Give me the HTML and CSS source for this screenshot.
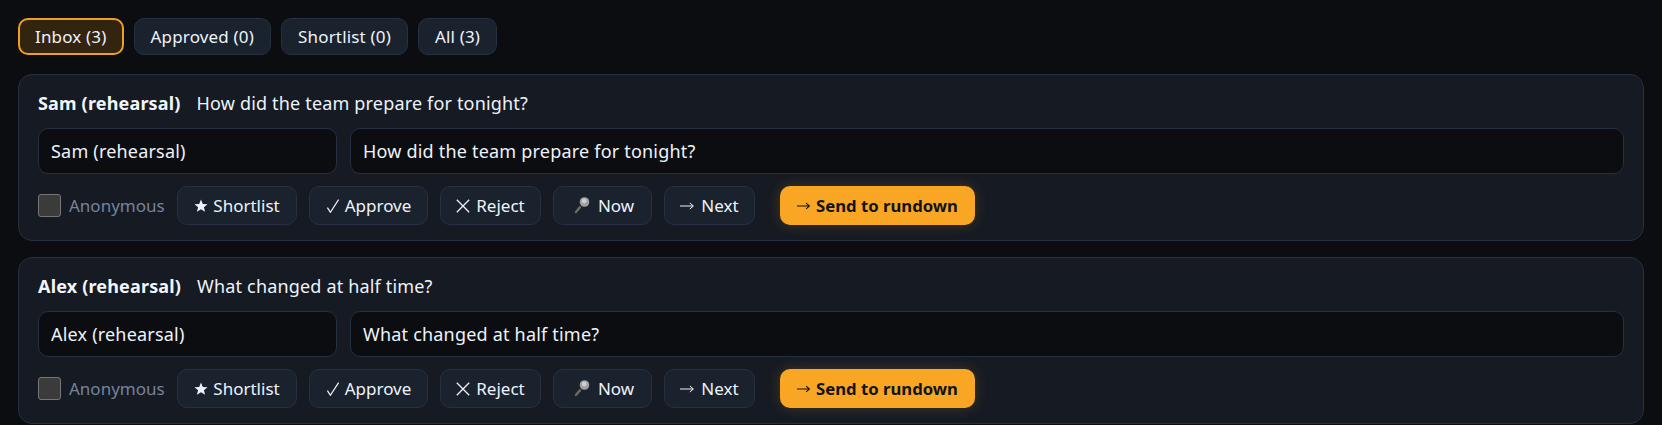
FILE: index.html
```html
<!DOCTYPE html>
<html lang="en">
<head>
<meta charset="utf-8">
<title>Questions</title>
<link rel="stylesheet" href="styles.css">
</head>
<body>
<main class="page">
  <nav class="tabs">
    <button class="tab tab-active">Inbox (3)</button>
    <button class="tab">Approved (0)</button>
    <button class="tab">Shortlist (0)</button>
    <button class="tab">All (3)</button>
  </nav>
  <section class="card">
    <div class="head"><strong class="name">Sam (rehearsal)</strong><span>How did the team prepare for tonight?</span></div>
    <div class="fields">
      <input class="field field-name" value="Sam (rehearsal)">
      <input class="field field-q" value="How did the team prepare for tonight?">
    </div>
    <div class="actions">
      <label class="anon"><input type="checkbox" class="check"><span>Anonymous</span></label>
      <button class="btn b-short"><svg class="ico-star" viewBox="0 0 14 14"><path d="M7 .5l1.800 4.400 4.700.3-3.600 3 1.200 4.600L7 10.300l-4.100 2.500 1.200-4.600-3.600-3 4.700-.3z" fill="currentColor"/></svg>Shortlist</button>
      <button class="btn b-appr"><svg class="ico" viewBox="0 0 14 15"><path d="M1 9.200l3.200 5L13 .6" fill="none" stroke="currentColor" stroke-width="1.300"/></svg>Approve</button>
      <button class="btn b-rej"><svg class="ico" viewBox="0 0 14 14"><path d="M.8.800l12.400 12.400M13.200.800L.8 13.200" fill="none" stroke="currentColor" stroke-width="1.300"/></svg>Reject</button>
      <button class="btn b-now"><svg class="mic" viewBox="0 0 20 18"><path d="M2.200 17.800L.4 16l6.800-8.800 3.600 3.600z" fill="#222"/><path d="M3.500 14.900l5.200-6.200 1.700 1.700-5.400 6z" fill="#6e6e6e"/><circle cx="13.500" cy="5" r="4.800" fill="#a0a0a0"/><circle cx="13.200" cy="4" r="2.400" fill="#cfcfcf"/></svg>Now</button>
      <button class="btn b-next"><svg class="ico arrow" viewBox="0 0 14 8"><path d="M0 4h13M9.800 1L13.400 4 9.800 7" fill="none" stroke="currentColor" stroke-width="1"/></svg>Next</button>
      <button class="btn-send"><svg class="ico arrow arrow-s" viewBox="0 0 14 8"><path d="M0 4h13M9.800 1L13.400 4 9.800 7" fill="none" stroke="currentColor" stroke-width="1.100"/></svg>Send to rundown</button>
    </div>
  </section>
  <section class="card">
    <div class="head"><strong class="name">Alex (rehearsal)</strong><span>What changed at half time?</span></div>
    <div class="fields">
      <input class="field field-name" value="Alex (rehearsal)">
      <input class="field field-q" value="What changed at half time?">
    </div>
    <div class="actions">
      <label class="anon"><input type="checkbox" class="check"><span>Anonymous</span></label>
      <button class="btn b-short"><svg class="ico-star" viewBox="0 0 14 14"><path d="M7 .5l1.800 4.400 4.700.3-3.600 3 1.200 4.600L7 10.300l-4.100 2.500 1.200-4.600-3.600-3 4.700-.3z" fill="currentColor"/></svg>Shortlist</button>
      <button class="btn b-appr"><svg class="ico" viewBox="0 0 14 15"><path d="M1 9.200l3.200 5L13 .6" fill="none" stroke="currentColor" stroke-width="1.300"/></svg>Approve</button>
      <button class="btn b-rej"><svg class="ico" viewBox="0 0 14 14"><path d="M.8.800l12.400 12.400M13.200.800L.8 13.200" fill="none" stroke="currentColor" stroke-width="1.300"/></svg>Reject</button>
      <button class="btn b-now"><svg class="mic" viewBox="0 0 20 18"><path d="M2.200 17.800L.4 16l6.800-8.800 3.600 3.600z" fill="#222"/><path d="M3.500 14.900l5.200-6.200 1.700 1.700-5.400 6z" fill="#6e6e6e"/><circle cx="13.500" cy="5" r="4.800" fill="#a0a0a0"/><circle cx="13.200" cy="4" r="2.400" fill="#cfcfcf"/></svg>Now</button>
      <button class="btn b-next"><svg class="ico arrow" viewBox="0 0 14 8"><path d="M0 4h13M9.800 1L13.400 4 9.800 7" fill="none" stroke="currentColor" stroke-width="1"/></svg>Next</button>
      <button class="btn-send"><svg class="ico arrow arrow-s" viewBox="0 0 14 8"><path d="M0 4h13M9.800 1L13.400 4 9.800 7" fill="none" stroke="currentColor" stroke-width="1.100"/></svg>Send to rundown</button>
    </div>
  </section>
</main>
</body>
</html>
```
FILE: styles.css
```css
* { box-sizing: border-box; }
html, body { margin: 0; height: 100%; overflow: hidden; background: #0b0d11; }
body { font-family: "Noto Sans", "Liberation Sans", sans-serif; color: #eef3fa; font-size: 17px; }
button, input { font-family: inherit; }
.page { padding: 18px 18px 0; display: flex; flex-direction: column; gap: 16px; }
.tabs { display: flex; gap: 10px; margin-bottom: 3px; }
.tab { height: 37px; padding: 0 16px; border-radius: 10px; border: 1px solid #263040; background: #1a222e; color: #eef3fa; font-size: 17px; letter-spacing: .17px; }
.tab-active { border: 2px solid #f0a020; background: #33240f; padding: 0 15px; }
.card { border: 1px solid #263040; border-radius: 14px; background: #151a23; height: 167px; padding: 15px 19px 14px; display: flex; flex-direction: column; }
.head { display: flex; gap: 16px; font-size: 18px; letter-spacing: .17px; line-height: 26px; height: 26px; margin-bottom: 12px; align-items: center; }
.name { font-weight: 700; color: #f2f5fa; }
.fields { display: flex; gap: 13px; margin-bottom: 12px; }
.field { height: 46px; border: 1px solid #263040; border-radius: 10px; background: #0b0d11; color: #eef3fa; font-size: 18px; letter-spacing: .2px; padding: 0 12px; outline: none; }
.field-name { width: 299px; flex: none; }
.field-q { flex: 1; min-width: 0; }
.actions { display: flex; align-items: center; gap: 12px; }
.anon { display: flex; align-items: center; gap: 8px; width: 127px; flex: none; color: #76839a; font-size: 17px; white-space: nowrap; }
.check { appearance: none; width: 23px; height: 23px; margin: 0; flex: none; border: 1px solid #767676; border-radius: 3px; background: #3b3b3b; }
.btn { height: 39px; border: 1px solid #263040; border-radius: 10px; background: #1a222e; color: #eef3fa; font-size: 17px; padding: 0; display: flex; align-items: center; justify-content: center; }
.b-short { width: 120px; gap: 5px; }
.b-appr { width: 119px; gap: 5px; }
.b-rej { width: 101px; gap: 6px; }
.b-now { width: 99px; gap: 7px; }
.b-next { width: 91px; gap: 7px; }
.ico { width: 14px; height: 14px; flex: none; }
.ico-star { width: 14px; height: 14px; flex: none; }
.arrow { height: 8px; }
.arrow-s { width: 13px; }
.mic { width: 20px; height: 18px; flex: none; }
.btn-send { height: 39px; width: 195px; margin-left: 13px; border: 0; border-radius: 10px; background: #f8a623; color: #11141a; font-size: 16.7px; font-weight: 700; display: flex; align-items: center; justify-content: center; gap: 6px; padding: 0; box-shadow: 0 0 14px rgba(248,166,35,.22); }
```
